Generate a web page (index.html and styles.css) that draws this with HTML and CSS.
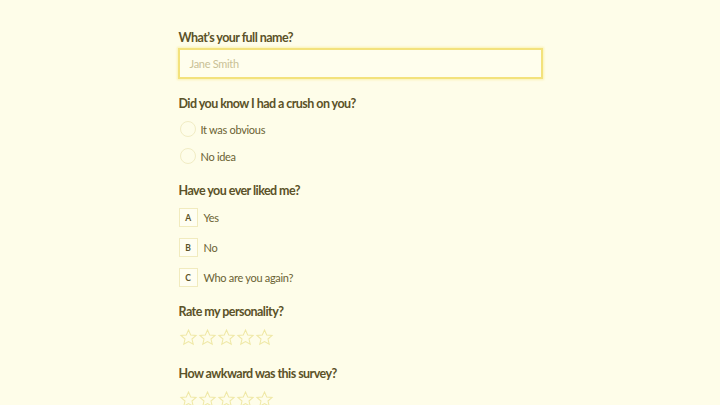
FILE: index.html
```html
<!DOCTYPE html>
<html>
<head>
<meta charset="utf-8">
<link rel="stylesheet" href="styles.css">
</head>
<body>
<main class="form">
  <section class="q q-tight">
    <label class="q-title q-title-input">What’s your full name?</label>
    <div class="input">Jane Smith</div>
  </section>
  <section class="q">
    <div class="q-title">Did you know I had a crush on you?</div>
    <div class="radios">
      <div class="radio"><span class="circle"></span><span>It was obvious</span></div>
      <div class="radio"><span class="circle"></span><span>No idea</span></div>
    </div>
  </section>
  <section class="q q-tight">
    <div class="q-title">Have you ever liked me?</div>
    <div class="choices">
      <div class="choice"><span class="key">A</span><span>Yes</span></div>
      <div class="choice"><span class="key">B</span><span>No</span></div>
      <div class="choice"><span class="key">C</span><span>Who are you again?</span></div>
    </div>
  </section>
  <section class="q">
    <div class="q-title">Rate my personality?</div>
    <div class="stars">
      <svg viewBox="0 0 24 24"><path d="M12 2.5l2.8 6.3 6.8.6-5.2 4.5 1.6 6.7L12 17.1l-6 3.5 1.6-6.7-5.2-4.5 6.8-.6z"/></svg>
      <svg viewBox="0 0 24 24"><path d="M12 2.5l2.8 6.3 6.8.6-5.2 4.5 1.6 6.7L12 17.1l-6 3.5 1.6-6.7-5.2-4.5 6.8-.6z"/></svg>
      <svg viewBox="0 0 24 24"><path d="M12 2.5l2.8 6.3 6.8.6-5.2 4.5 1.6 6.7L12 17.1l-6 3.5 1.6-6.7-5.2-4.5 6.8-.6z"/></svg>
      <svg viewBox="0 0 24 24"><path d="M12 2.5l2.8 6.3 6.8.6-5.2 4.5 1.6 6.7L12 17.1l-6 3.5 1.6-6.7-5.2-4.5 6.8-.6z"/></svg>
      <svg viewBox="0 0 24 24"><path d="M12 2.5l2.8 6.3 6.8.6-5.2 4.5 1.6 6.7L12 17.1l-6 3.5 1.6-6.7-5.2-4.5 6.8-.6z"/></svg>
    </div>
  </section>
  <section class="q">
    <div class="q-title">How awkward was this survey?</div>
    <div class="stars">
      <svg viewBox="0 0 24 24"><path d="M12 2.5l2.8 6.3 6.8.6-5.2 4.5 1.6 6.7L12 17.1l-6 3.5 1.6-6.7-5.2-4.5 6.8-.6z"/></svg>
      <svg viewBox="0 0 24 24"><path d="M12 2.5l2.8 6.3 6.8.6-5.2 4.5 1.6 6.7L12 17.1l-6 3.5 1.6-6.7-5.2-4.5 6.8-.6z"/></svg>
      <svg viewBox="0 0 24 24"><path d="M12 2.5l2.8 6.3 6.8.6-5.2 4.5 1.6 6.7L12 17.1l-6 3.5 1.6-6.7-5.2-4.5 6.8-.6z"/></svg>
      <svg viewBox="0 0 24 24"><path d="M12 2.5l2.8 6.3 6.8.6-5.2 4.5 1.6 6.7L12 17.1l-6 3.5 1.6-6.7-5.2-4.5 6.8-.6z"/></svg>
      <svg viewBox="0 0 24 24"><path d="M12 2.5l2.8 6.3 6.8.6-5.2 4.5 1.6 6.7L12 17.1l-6 3.5 1.6-6.7-5.2-4.5 6.8-.6z"/></svg>
    </div>
  </section>
</main>
</body>
</html>
```
FILE: styles.css
```css
html, body {
  margin: 0;
  padding: 0;
  background: #fefde9;
  height: 100%;
  overflow: hidden;
}
body {
  font-family: Lato, "Noto Sans", sans-serif;
  color: #5e5527;
}
.form {
  width: 365px;
  margin: 0 auto;
  padding-top: 28px;
  display: flex;
  flex-direction: column;
}
.q {
  display: flex;
  flex-direction: column;
  margin-bottom: 17px;
}
.q-tight {
  margin-bottom: 15px;
}
.q-title {
  font-size: 12.5px;
  font-weight: 700;
  letter-spacing: -0.55px;
  line-height: 18px;
  padding-left: 1px;
  padding-top: 1px;
  margin-bottom: 5px;
  color: #5b5228;
}
.q-title-input {
  margin-bottom: 1px;
}
.input {
  height: 27px;
  border: 2px solid #f3e27c;
  box-shadow: 0 0 2px 1px #faf2b4;
  background: #fffeed;
  color: #c9c195;
  font-size: 11px;
  letter-spacing: -0.3px;
  line-height: 27px;
  padding-left: 10px;
}
.radios {
  display: flex;
  flex-direction: column;
  gap: 11px;
  padding-left: 2px;
  margin-top: 3px;
}
.radio {
  display: flex;
  align-items: center;
  gap: 5px;
  height: 16px;
  font-size: 11px;
  letter-spacing: -0.3px;
  color: #6a6233;
}
.circle {
  width: 14px;
  height: 14px;
  border: 1px solid #f1ecc4;
  border-radius: 50%;
}
.choices {
  display: flex;
  flex-direction: column;
  gap: 11px;
  padding-left: 1px;
  margin-top: 3px;
}
.choice {
  display: flex;
  align-items: center;
  gap: 6px;
  height: 19px;
  font-size: 11px;
  letter-spacing: -0.3px;
  color: #6a6233;
}
.key {
  width: 17px;
  height: 17px;
  border: 1px solid #f1ebbe;
  background: #fffef2;
  display: flex;
  align-items: center;
  justify-content: center;
  font-size: 8.5px;
  font-weight: 700;
  color: #5c5326;
}
.stars {
  display: flex;
  padding-left: 1px;
  margin-top: 2px;
}
.stars svg {
  width: 19px;
  height: 19px;
  fill: none;
  stroke: #efe8a6;
  stroke-width: 1.3;
  stroke-linejoin: miter;
}
```
